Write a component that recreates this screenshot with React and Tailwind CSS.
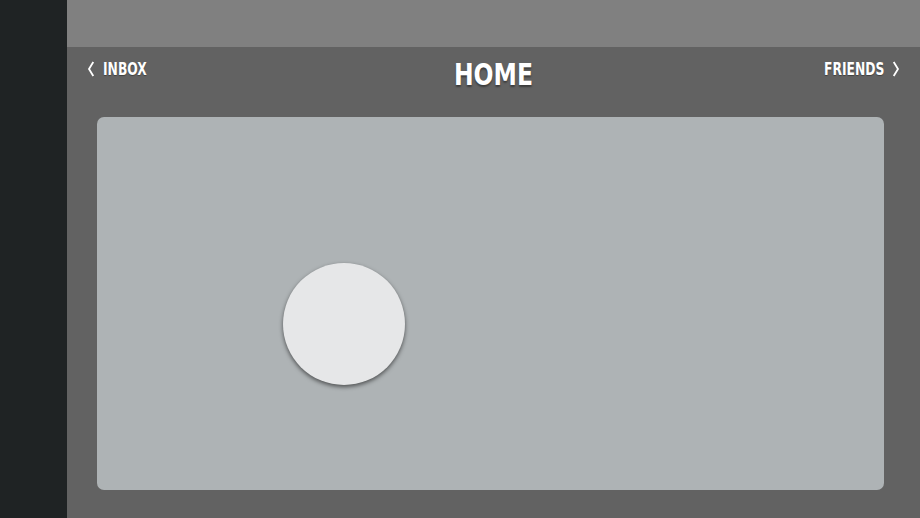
import React from "react";

const font = { fontFamily: '"Liberation Sans Narrow","DejaVu Sans Condensed","Roboto","Liberation Sans",sans-serif' };
const smallShadow = { textShadow: "0 1px 1px rgba(0,0,0,0.35)" };

export default function App() {
  return (
    <div className="flex w-[920px] h-[518px] overflow-hidden bg-[#626262]" style={font}>
      <div className="w-[67px] h-full bg-[#1f2324]" />
      <div className="flex-1 flex flex-col">
        <div className="h-[47px] bg-[#808080]" />
        <div className="h-[70px] grid grid-cols-[1fr_auto_1fr] items-start pl-[20px] pr-[20px] text-white font-bold">
          <div className="flex items-start mt-[14px]">
            <svg width="8" height="16" viewBox="0 0 8 16" className="shrink-0">
              <path d="M6.3 1 L2 8 L6.3 15" fill="none" stroke="white" strokeWidth="1.8" />
            </svg>
            <span className="ml-[8px] -mt-[1px] inline-block origin-left scale-x-[0.76] text-[18px] leading-none" style={smallShadow}>INBOX</span>
          </div>
          <div className="mt-[13px] inline-block origin-center scale-x-[0.87] text-[30px] leading-none" style={{ textShadow: "0 2px 2px rgba(0,0,0,0.4)" }}>HOME</div>
          <div className="flex items-start justify-end mt-[14px]">
            <span className="mr-[8px] -mt-[1px] inline-block origin-right scale-x-[0.76] text-[18px] leading-none" style={smallShadow}>FRIENDS</span>
            <svg width="8" height="16" viewBox="0 0 8 16" className="shrink-0">
              <path d="M1.7 1 L6 8 L1.7 15" fill="none" stroke="white" strokeWidth="1.8" />
            </svg>
          </div>
        </div>
        <div className="flex-1 pl-[30px] pr-[36px] pb-[28px]">
          <div className="w-full h-full rounded-[7px] bg-[#aeb3b5] pl-[186px] pt-[146px]">
            <div className="w-[122px] h-[122px] rounded-full bg-[#e6e7e8] shadow-[0_2px_4px_rgba(0,0,0,0.55)]" />
          </div>
        </div>
      </div>
    </div>
  );
}
